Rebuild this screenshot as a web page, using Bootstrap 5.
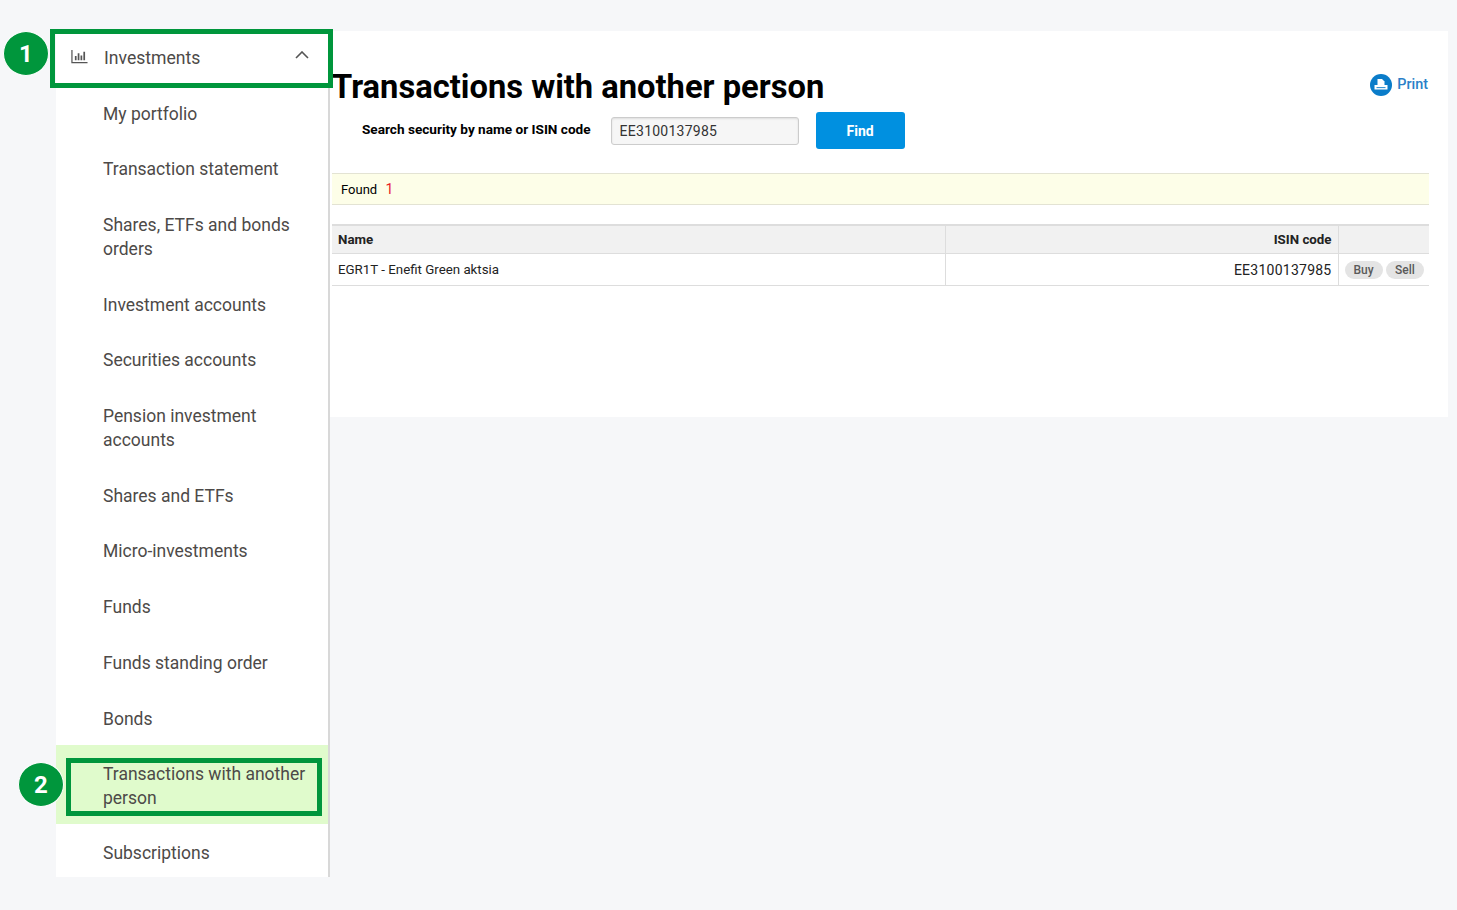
<!DOCTYPE html>
<html lang="en">

<head>
    <meta charset="UTF-8">
    <meta name="viewport" content="width=device-width, initial-scale=1.0">
    <title>Transactions with another person</title>
    <link href="https://cdn.jsdelivr.net/npm/bootstrap@5.3.5/dist/css/bootstrap.min.css" rel="stylesheet">
    <style>
        body { background: #f6f7f9; font-family: Roboto, "Liberation Sans", sans-serif; color: #000; }
        .page-wrap { padding: 31px 0 0 56px; position: relative; height: 910px; overflow: hidden; }
        .side-menu { width: 274px; height: 846px; overflow: hidden; background: #fff; border-right: 2px solid #d8d8d8; flex: none; }
        .menu-head { height: 55.5px; padding-left: 15px; padding-right: 19px; font-size: 17.6px; color: #4d4a48; }
        .menu-head span { position: relative; top: -1px; }
        .menu-link { display: block; padding: 16px 10px 16px 47px; font-size: 17.5px; line-height: 23.75px; color: #4d4a48; text-decoration: none; }
        .menu-link.current { background: #e0fbcc; margin: -2px 0 2px; padding-top: 17.5px; padding-bottom: 13.5px; }
        .main-panel { width: 1118px; height: 386px; background: #fff; padding: 37px 19px 0 2px; flex: none; }
        .page-title { font-size: 32.7px; font-weight: 700; line-height: 38px; margin: 0; color: #000; }
        .print-link { color: #2a7fc8; font-size: 14.4px; font-weight: 500; text-decoration: none; margin: 6px 1px 0 0; gap: 5px; }
        .search-form { margin-top: 6px; }
        .search-label { font-size: 13.6px; font-weight: 700; margin: 0 20px 2px 30px; }
        .search-input { width: 188px; height: 28px; background: #f6f6f6; border: 1px solid #ccc; border-radius: 3px; box-shadow: inset 0 1px 2px #ddd; padding: 0 8px; font-size: 14px; letter-spacing: .25px; color: #333; }
        .find-btn { width: 89px; height: 37px; margin-left: 17px; padding-top: 3px; background: #0090e0; border-radius: 3px; font-size: 14px; font-weight: 700; color: #fff; border: 0; }
        .found-bar { margin-top: 24px; height: 32px; background: #fdfee8; border-top: 1px solid #e3e3d3; border-bottom: 1px solid #e3e3d3; padding: 0 9px; font-size: 13px; line-height: 30px; }
        .found-bar span { color: #e8202a; margin-left: 5px; font-size: 14px; }
        .result-table { margin: 19px 0 0; font-size: 13.3px; table-layout: fixed; border-top: 2px solid #ddd; }
        .result-table > :not(caption) > * > * { padding: 2px 6px 0; vertical-align: middle; border-bottom: 1px solid #ddd; box-shadow: none; color: #222; }
        .result-table thead th { height: 28px; background: #f1f1f1; font-weight: 700; }
        .result-table tbody td { height: 32px; }
        .result-table .mid-col { border-left: 1px solid #ddd; border-right: 1px solid #ddd; }
        .isin-val { font-size: 14px; letter-spacing: .25px; }
        .pill-btn { display: inline-block; background: #e4e4e4; color: #5a5a5a; font-size: 12px; font-weight: 500; border-radius: 10px; padding: 1px 9px; line-height: 16px; }
        .num-badge { position: absolute; width: 46px; height: 45px; border-radius: 50%; background: #00963c; color: #fff; font-size: 24px; font-weight: 700; border: 1px solid #fff; }
        .mark-box { position: absolute; border: 5px solid #00963c; }
        .badge-one { left: 3px; top: 31px; }
        .badge-two { left: 18px; top: 762px; }
        .box-one { left: 50px; top: 29px; width: 283px; height: 59px; }
        .box-two { left: 66px; top: 758px; width: 256px; height: 58px; }
    </style>
</head>

<body>
    <div class="page-wrap d-flex">
        <nav class="side-menu">
            <div class="menu-head d-flex align-items-center">
                <svg class="mb-1" width="17" height="16" viewBox="0 0 18 16" fill="none" stroke="#555" stroke-width="1.3">
                    <path d="M1 .5v13.5h16.5" />
                    <path d="M5 11.5V7M8 11.5V4M11 11.5V6.5M14 11.5V2.5" stroke-width="1.8" />
                </svg>
                <span class="ms-3 flex-grow-1">Investments</span>
                <svg class="mb-2" width="14" height="8" viewBox="0 0 14 8" fill="none" stroke="#555" stroke-width="1.6">
                    <path d="M1 7l6-6 6 6" />
                </svg>
            </div>
            <a class="menu-link" href="#">My portfolio</a>
            <a class="menu-link" href="#">Transaction statement</a>
            <a class="menu-link" href="#">Shares, ETFs and bonds orders</a>
            <a class="menu-link" href="#">Investment accounts</a>
            <a class="menu-link" href="#">Securities accounts</a>
            <a class="menu-link" href="#">Pension investment accounts</a>
            <a class="menu-link" href="#">Shares and ETFs</a>
            <a class="menu-link" href="#">Micro-investments</a>
            <a class="menu-link" href="#">Funds</a>
            <a class="menu-link" href="#">Funds standing order</a>
            <a class="menu-link" href="#">Bonds</a>
            <a class="menu-link current" href="#">Transactions with another person</a>
            <a class="menu-link" href="#">Subscriptions</a>
        </nav>

        <main class="main-panel">
            <div class="d-flex justify-content-between align-items-start">
                <h1 class="page-title">Transactions with another person</h1>
                <a class="print-link d-flex align-items-center" href="#">
                    <svg width="22" height="22" viewBox="0 0 22 22">
                        <circle cx="11" cy="11" r="11" fill="#0a7cc9" />
                        <path d="M7.5 5h4.5l2.5 2.5V11h-7z" fill="#fff" />
                        <path d="M4.5 11h13v4.5h-13z" fill="#fff" />
                        <path d="M6.5 13.2h9v.9h-9z" fill="#0a7cc9" />
                    </svg>
                    Print
                </a>
            </div>
            <form class="search-form d-flex align-items-center">
                <label class="search-label" for="isin">Search security by name or ISIN code</label>
                <input class="search-input" id="isin" type="text" value="EE3100137985">
                <button class="find-btn" type="button">Find</button>
            </form>
            <div class="found-bar">Found <span>1</span></div>
            <table class="table result-table">
                <colgroup>
                    <col style="width:613px">
                    <col style="width:393px">
                    <col>
                </colgroup>
                <thead>
                    <tr>
                        <th>Name</th>
                        <th class="mid-col text-end">ISIN code</th>
                        <th></th>
                    </tr>
                </thead>
                <tbody>
                    <tr>
                        <td>EGR1T - Enefit Green aktsia</td>
                        <td class="mid-col text-end"><span class="isin-val">EE3100137985</span></td>
                        <td class="text-nowrap"><span class="pill-btn">Buy</span> <span class="pill-btn">Sell</span></td>
                    </tr>
                </tbody>
            </table>
        </main>

        <div class="mark-box box-one"></div>
        <div class="mark-box box-two"></div>
        <div class="num-badge badge-one d-flex align-items-center justify-content-center">1</div>
        <div class="num-badge badge-two d-flex align-items-center justify-content-center">2</div>
    </div>
</body>

</html>
